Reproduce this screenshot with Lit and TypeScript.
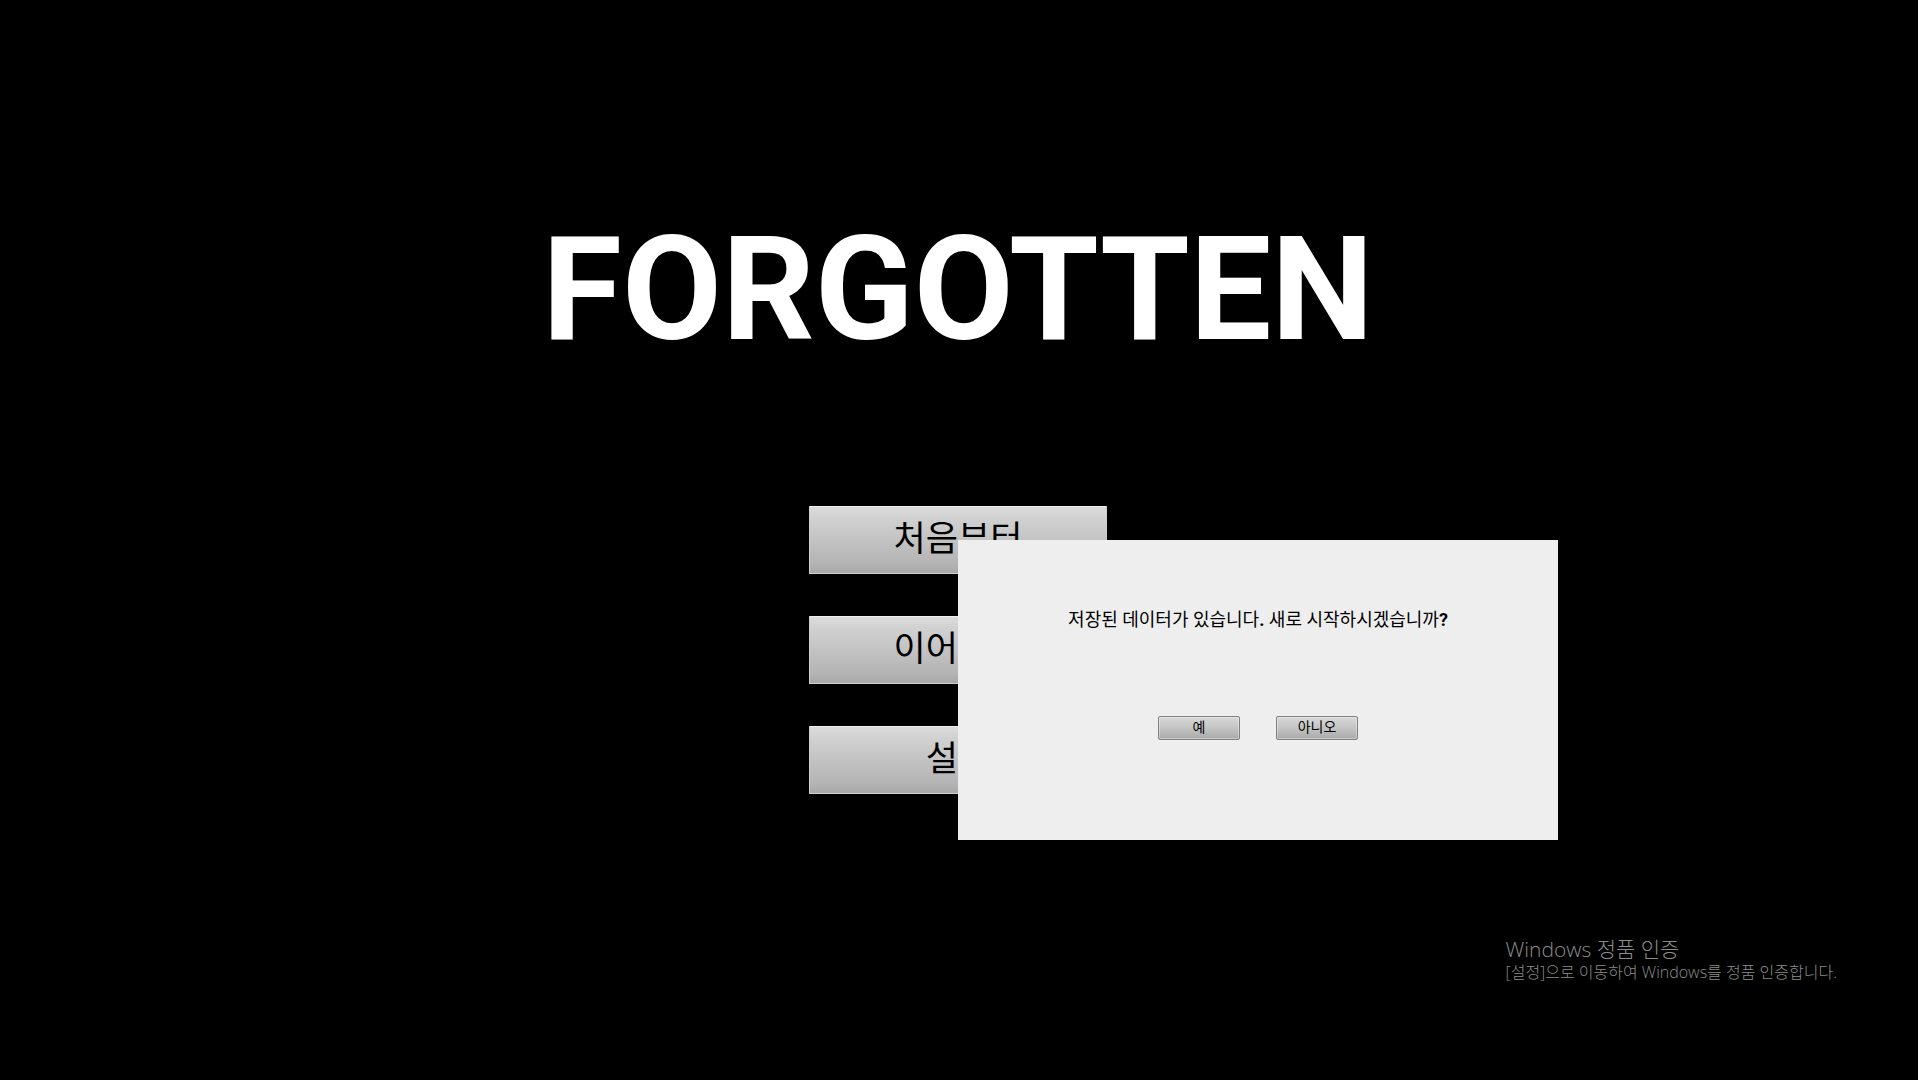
import { LitElement, html, css } from "lit";
import { customElement, state } from "lit/decorators.js";

const MENU = ["처음부터", "이어하기", "설정"];

@customElement("app-root")
export class AppRoot extends LitElement {
  @state() private confirming = true;

  static styles = css`
    :host {
      display: block;
      position: relative;
      min-height: 100vh;
      overflow: hidden;
      background: #000;
      font-family: Roboto, "Noto Sans CJK KR", sans-serif;
    }
    * {
      box-sizing: border-box;
    }
    .screen {
      display: flex;
      flex-direction: column;
      align-items: center;
      padding: 203px 2px 0 0;
    }
    .title {
      margin: 0;
      color: #fff;
      font-size: 145px;
      line-height: 172px;
      font-weight: 700;
    }
    .menu {
      display: flex;
      flex-direction: column;
      gap: 42px;
      padding-top: 131px;
    }
    button {
      margin: 0;
      color: #000;
      font-family: inherit;
      font-weight: 400;
      cursor: pointer;
    }
    .item {
      width: 298px;
      height: 68px;
      padding: 0;
      border: 1px solid #cfcfcf;
      border-top-color: #f0f0f0;
      border-radius: 1px;
      background: linear-gradient(#dcdcdc, #d2d2d2 15%, #b4b4b4 85%, #a9a9a9);
      font-size: 35px;
      line-height: 60px;
    }
    .dialog {
      position: absolute;
      left: calc(50% - 1px);
      top: 50%;
      display: flex;
      flex-direction: column;
      align-items: center;
      gap: 82px;
      width: 600px;
      height: 300px;
      margin: 0;
      padding: 66px 0 0;
      border: 0;
      background: #eee;
      color: #000;
    }
    .dialog[hidden] {
      display: none;
    }
    .message {
      margin: 0;
      font-size: 18px;
      line-height: 28px;
      white-space: nowrap;
    }
    .mark {
      font-weight: 700;
    }
    .answers {
      display: flex;
      gap: 36px;
    }
    .answer {
      width: 82px;
      height: 24px;
      padding: 0 0 2px;
      border: 1px solid #808080;
      border-radius: 2px;
      background: linear-gradient(#d8d8d8, #c4c4c4 50%, #a9a9a9);
      box-shadow: inset 0 0 0 1px rgba(255, 255, 255, 0.35);
      font-size: 14px;
      line-height: 20px;
    }
    .notice {
      position: absolute;
      right: 81px;
      bottom: 97px;
      color: #8c8c8c;
      font-family: "Open Sans", "Noto Sans CJK KR", sans-serif;
      font-weight: 300;
      white-space: nowrap;
      pointer-events: none;
    }
    .notice-title {
      margin: 0;
      font-size: 21px;
      line-height: 24px;
      font-weight: 300;
    }
    .notice-text {
      margin: 0;
      font-size: 16px;
      line-height: 22px;
    }
  `;

  private close() {
    this.confirming = false;
  }

  private open() {
    this.confirming = true;
  }

  render() {
    return html`
      <main class="screen">
        <h1 class="title">FORGOTTEN</h1>
        <nav class="menu">
          ${MENU.map(
            (label) =>
              html`<button class="item" type="button" @click=${this.open}>${label}</button>`
          )}
        </nav>
      </main>
      <dialog class="dialog" ?open=${this.confirming} ?hidden=${!this.confirming} aria-labelledby="message">
        <p class="message" id="message">저장된 데이터가 있습니다<span class="mark">.</span> 새로 시작하시겠습니까<span class="mark">?</span></p>
        <div class="answers">
          <button class="answer" type="button" @click=${this.close}>예</button>
          <button class="answer" type="button" @click=${this.close}>아니오</button>
        </div>
      </dialog>
      <aside class="notice">
        <h2 class="notice-title">Windows 정품 인증</h2>
        <p class="notice-text">[설정]으로 이동하여 Windows를 정품 인증합니다.</p>
      </aside>
    `;
  }
}
